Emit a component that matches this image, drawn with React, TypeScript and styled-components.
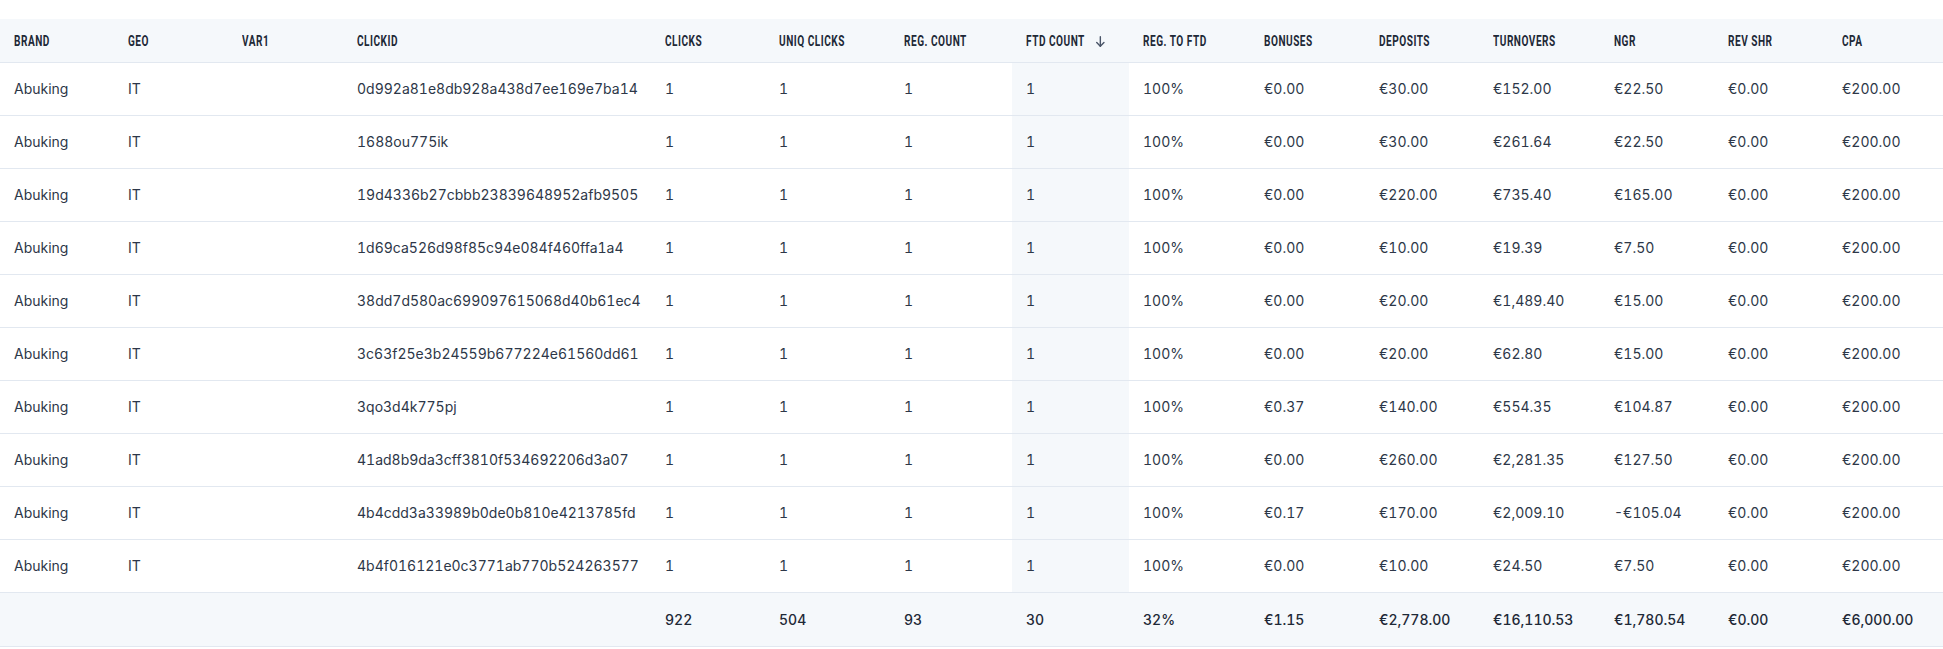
import React from "react";
import styled, { createGlobalStyle } from "styled-components";

const GlobalStyle = createGlobalStyle`
  html, body { margin: 0; padding: 0; background: #ffffff; }
  body { font-family: Inter, "Noto Sans", sans-serif; }
`;

type Col = { key: string; label: string; width: number; sorted?: boolean };

const columns: Col[] = [
  { key: "brand", label: "Brand", width: 114 },
  { key: "geo", label: "Geo", width: 114 },
  { key: "var1", label: "Var1", width: 115 },
  { key: "clickid", label: "Clickid", width: 308 },
  { key: "clicks", label: "Clicks", width: 114 },
  { key: "uniq", label: "Uniq Clicks", width: 125 },
  { key: "reg", label: "Reg. Count", width: 122 },
  { key: "ftd", label: "FTD Count", width: 117, sorted: true },
  { key: "regftd", label: "Reg. to FTD", width: 121 },
  { key: "bonuses", label: "Bonuses", width: 115 },
  { key: "deposits", label: "Deposits", width: 114 },
  { key: "turnovers", label: "Turnovers", width: 121 },
  { key: "ngr", label: "NGR", width: 114 },
  { key: "revshr", label: "Rev Shr", width: 114 },
  { key: "cpa", label: "CPA", width: 115 },
];

// clickid, bonuses, deposits, turnovers, ngr
const rows: [string, string, string, string, string][] = [
  ["0d992a81e8db928a438d7ee169e7ba14", "€0.00", "€30.00", "€152.00", "€22.50"],
  ["1688ou775ik", "€0.00", "€30.00", "€261.64", "€22.50"],
  ["19d4336b27cbbb23839648952afb9505", "€0.00", "€220.00", "€735.40", "€165.00"],
  ["1d69ca526d98f85c94e084f460ffa1a4", "€0.00", "€10.00", "€19.39", "€7.50"],
  ["38dd7d580ac699097615068d40b61ec4", "€0.00", "€20.00", "€1,489.40", "€15.00"],
  ["3c63f25e3b24559b677224e61560dd61", "€0.00", "€20.00", "€62.80", "€15.00"],
  ["3qo3d4k775pj", "€0.37", "€140.00", "€554.35", "€104.87"],
  ["41ad8b9da3cff3810f534692206d3a07", "€0.00", "€260.00", "€2,281.35", "€127.50"],
  ["4b4cdd3a33989b0de0b810e4213785fd", "€0.17", "€170.00", "€2,009.10", "-€105.04"],
  ["4b4f016121e0c3771ab770b524263577", "€0.00", "€10.00", "€24.50", "€7.50"],
];

const totals = ["", "", "", "", "922", "504", "93", "30", "32%", "€1.15", "€2,778.00", "€16,110.53", "€1,780.54", "€0.00", "€6,000.00"];

const SCALE = 0.72;

const Page = styled.div`
  padding-top: 19px;
  width: 1943px;
`;

const Table = styled.table`
  width: 1943px;
  table-layout: fixed;
  border-collapse: collapse;
  border-spacing: 0;
`;

const HeadRow = styled.tr`
  background: #f5f8fb;
  border-bottom: 1px solid #e2e8f0;
  height: 43px;
`;

const HeadCell = styled.th`
  padding: 0 13px 0 14px;
  text-align: left;
  white-space: nowrap;
  overflow: hidden;
  vertical-align: middle;
`;

const HeadLabel = styled.span`
  display: inline-flex;
  align-items: center;
  transform: scaleX(${SCALE});
  transform-origin: left center;
  font-family: Roboto, "Liberation Sans", sans-serif;
  font-weight: 700;
  font-size: 14px;
  line-height: 16px;
  letter-spacing: 0.7px;
  text-transform: uppercase;
  color: #1e2937;
`;

const SortIcon = styled.svg`
  width: ${9 / SCALE}px;
  height: 11px;
  margin-left: ${11 / SCALE}px;
  margin-top: 1px;
`;

const BodyRow = styled.tr`
  height: 53px;
  border-bottom: 1px solid #e2e8f0;
`;

const Cell = styled.td<{ $highlight?: boolean }>`
  padding: 0 13px 0 14px;
  font-family: Inter, "Noto Sans", sans-serif;
  font-size: 14px;
  font-weight: 400;
  font-variant-numeric: tabular-nums;
  color: #2d3748;
  white-space: nowrap;
  overflow: hidden;
  vertical-align: middle;
  background: ${(p) => (p.$highlight ? "#f5f8fb" : "transparent")};
`;

const FootRow = styled.tr`
  height: 54px;
  background: #f5f8fb;
  border-bottom: 1px solid #e2e8f0;
`;

const FootCell = styled.td`
  padding: 0 13px 0 14px;
  font-family: Inter, "Noto Sans", sans-serif;
  font-size: 14px;
  font-weight: 500;
  font-variant-numeric: tabular-nums;
  color: #1e2937;
  white-space: nowrap;
  vertical-align: middle;
`;

const ArrowDown = () => (
  <SortIcon viewBox="0 0 9 11" preserveAspectRatio="none" fill="none" stroke="#4a5568" strokeWidth={1.4} strokeLinecap="round" strokeLinejoin="round">
    <path d="M4.5 0.8V10.2" />
    <path d="M0.9 6.6L4.5 10.2L8.1 6.6" />
  </SortIcon>
);

export default function App() {
  return (
    <>
      <GlobalStyle />
      <Page>
        <Table>
          <colgroup>
            {columns.map((c) => (
              <col key={c.key} style={{ width: c.width }} />
            ))}
          </colgroup>
          <thead>
            <HeadRow>
              {columns.map((c) => (
                <HeadCell key={c.key}>
                  <HeadLabel>
                    {c.label}
                    {c.sorted && <ArrowDown />}
                  </HeadLabel>
                </HeadCell>
              ))}
            </HeadRow>
          </thead>
          <tbody>
            {rows.map((r) => {
              const values = ["Abuking", "IT", "", r[0], "1", "1", "1", "1", "100%", r[1], r[2], r[3], r[4], "€0.00", "€200.00"];
              return (
                <BodyRow key={r[0]}>
                  {values.map((v, i) => (
                    <Cell key={i} $highlight={columns[i].sorted}>
                      {v}
                    </Cell>
                  ))}
                </BodyRow>
              );
            })}
          </tbody>
          <tfoot>
            <FootRow>
              {totals.map((v, i) => (
                <FootCell key={i}>{v}</FootCell>
              ))}
            </FootRow>
          </tfoot>
        </Table>
      </Page>
    </>
  );
}
